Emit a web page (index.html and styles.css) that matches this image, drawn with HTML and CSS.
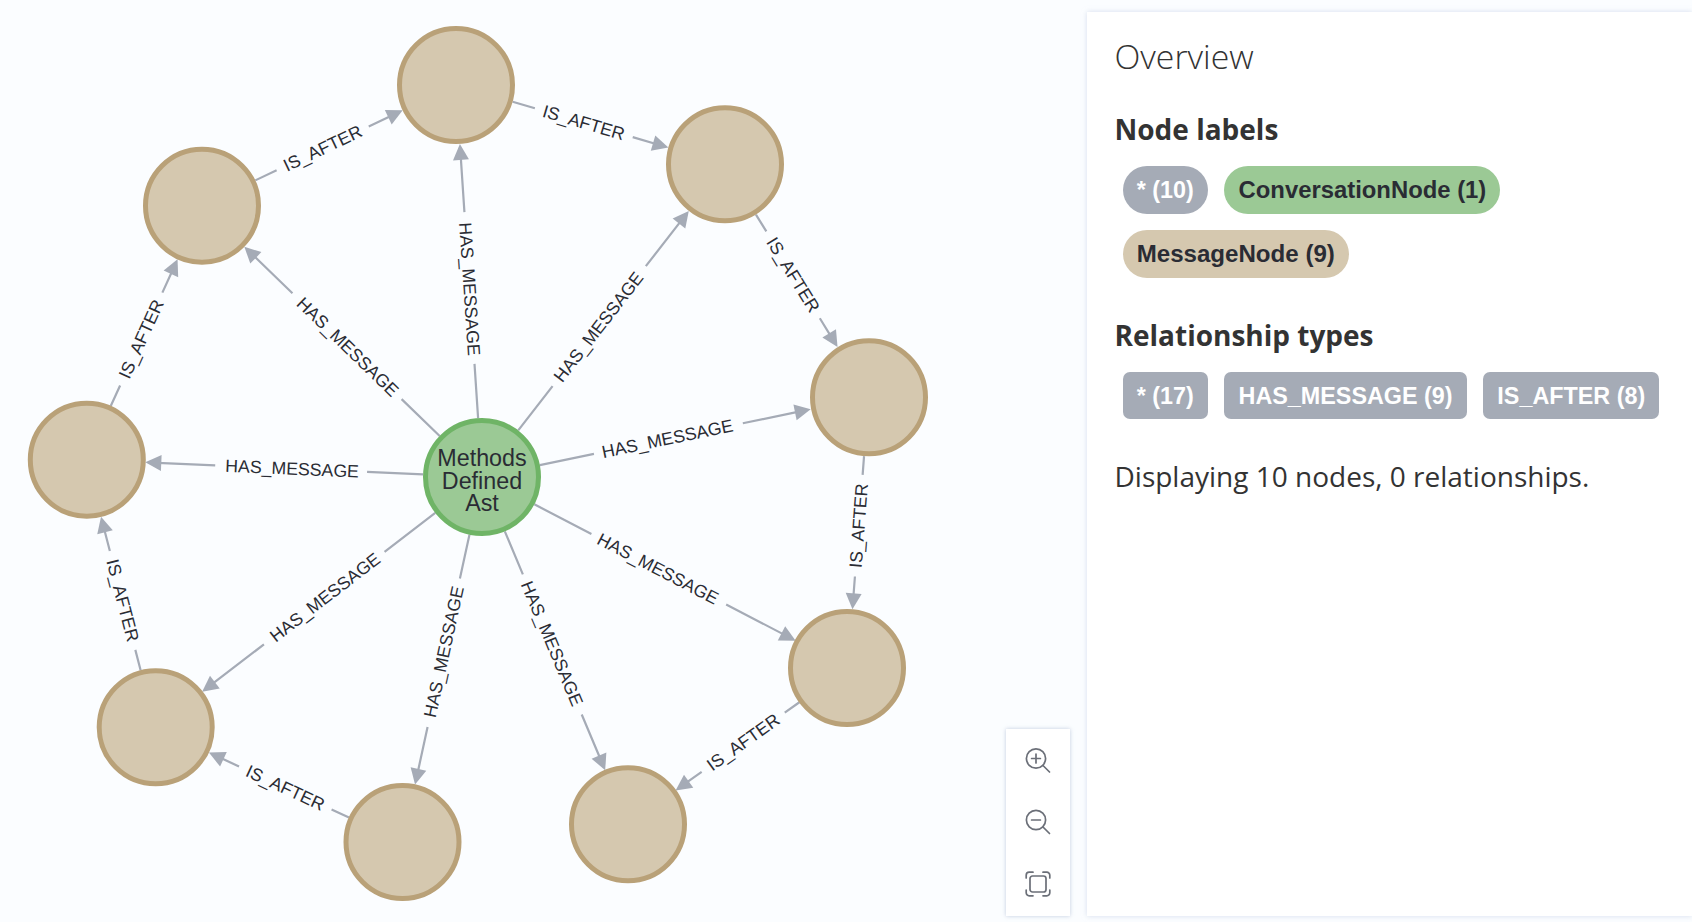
FILE: index.html
```html
<!DOCTYPE html>
<html lang="en">
<head>
<meta charset="utf-8">
<title>Graph overview</title>
<link rel="stylesheet" href="styles.css">
</head>
<body>
<main class="app">
  <section class="graph">
    <svg class="canvas" width="1087" height="922" viewBox="0 0 1087 922">
      <g transform="translate(469 281) rotate(86.2)"><path class="rel" d="M-125.4 0H-69M83 0H137.4"/><polygon class="head" points="-137.4,0 -121.4,-8 -121.4,8"/><text class="rel-label" x="8" y="6">HAS_MESSAGE</text></g>
      <g transform="translate(603.5 320.65) rotate(-52.15)"><path class="rel" d="M-139 0H-83M69 0H127"/><polygon class="head" points="139,0 123,-8 123,8"/><text class="rel-label" x="-8" y="6">HAS_MESSAGE</text></g>
      <g transform="translate(675.25 437.15) rotate(-11.65)"><path class="rel" d="M-138.3 0H-83M69 0H126.3"/><polygon class="head" points="138.3,0 122.3,-8 122.3,8"/><text class="rel-label" x="-8" y="6">HAS_MESSAGE</text></g>
      <g transform="translate(665 572.5) rotate(27.56)"><path class="rel" d="M-147.4 0H-83M69 0H135.4"/><polygon class="head" points="147.4,0 131.4,-8 131.4,8"/><text class="rel-label" x="-8" y="6">HAS_MESSAGE</text></g>
      <g transform="translate(555 650.85) rotate(67.22)"><path class="rel" d="M-129.6 0H-83M69 0H117.6"/><polygon class="head" points="129.6,0 113.6,-8 113.6,8"/><text class="rel-label" x="-8" y="6">HAS_MESSAGE</text></g>
      <g transform="translate(442.25 659.65) rotate(-77.72)"><path class="rel" d="M-115.9 0H-69M83 0H127.9"/><polygon class="head" points="-127.9,0 -111.9,-8 -111.9,8"/><text class="rel-label" x="8" y="6">HAS_MESSAGE</text></g>
      <g transform="translate(318.7 602.35) rotate(-37.5)"><path class="rel" d="M-134.9 0H-69M83 0H146.9"/><polygon class="head" points="-146.9,0 -130.9,-8 -130.9,8"/><text class="rel-label" x="8" y="6">HAS_MESSAGE</text></g>
      <g transform="translate(284.15 468.35) rotate(2.5)"><path class="rel" d="M-127 0H-69M83 0H139"/><polygon class="head" points="-139,0 -123,-8 -123,8"/><text class="rel-label" x="8" y="6">HAS_MESSAGE</text></g>
      <g transform="translate(342 341.35) rotate(44.1)"><path class="rel" d="M-124 0H-69M83 0H136"/><polygon class="head" points="-136,0 -120,-8 -120,8"/><text class="rel-label" x="8" y="6">HAS_MESSAGE</text></g>

      <g transform="translate(278.95 785) rotate(24.88)"><path class="rel" d="M-65.2 0H-44M58 0H77.2"/><polygon class="head" points="-77.2,0 -61.2,-8 -61.2,8"/><text class="rel-label" x="7" y="6">IS_AFTER</text></g>
      <g transform="translate(120.85 593.7) rotate(75.54)"><path class="rel" d="M-67.4 0H-44M58 0H79.4"/><polygon class="head" points="-79.4,0 -63.4,-8 -63.4,8"/><text class="rel-label" x="7" y="6">IS_AFTER</text></g>
      <g transform="translate(144.15 332.7) rotate(-65.52)"><path class="rel" d="M-80.6 0H-58M44 0H68.6"/><polygon class="head" points="80.6,0 64.6,-8 64.6,8"/><text class="rel-label" x="-7" y="6">IS_AFTER</text></g>
      <g transform="translate(329 145.35) rotate(-25.42)"><path class="rel" d="M-81.6 0H-58M44 0H69.6"/><polygon class="head" points="81.6,0 65.6,-8 65.6,8"/><text class="rel-label" x="-7" y="6">IS_AFTER</text></g>
      <g transform="translate(590.5 124.65) rotate(16.43)"><path class="rel" d="M-81.2 0H-58M44 0H69.2"/><polygon class="head" points="81.2,0 65.2,-8 65.2,8"/><text class="rel-label" x="-7" y="6">IS_AFTER</text></g>
      <g transform="translate(796.75 280.8) rotate(58.37)"><path class="rel" d="M-77.8 0H-58M44 0H65.8"/><polygon class="head" points="77.8,0 61.8,-8 61.8,8"/><text class="rel-label" x="-7" y="6">IS_AFTER</text></g>
      <g transform="translate(858.25 532.65) rotate(-85.67)"><path class="rel" d="M-64.8 0H-44M58 0H76.8"/><polygon class="head" points="-76.8,0 -60.8,-8 -60.8,8"/><text class="rel-label" x="7" y="6">IS_AFTER</text></g>
      <g transform="translate(737.5 746.35) rotate(-35.46)"><path class="rel" d="M-64 0H-44M58 0H76"/><polygon class="head" points="-76,0 -60,-8 -60,8"/><text class="rel-label" x="7" y="6">IS_AFTER</text></g>

      <circle class="node-msg" cx="456" cy="85" r="56.5"/>
      <circle class="node-msg" cx="725" cy="164.3" r="56.5"/>
      <circle class="node-msg" cx="869" cy="397.3" r="56.5"/>
      <circle class="node-msg" cx="847" cy="668" r="56.5"/>
      <circle class="node-msg" cx="628" cy="824.2" r="56.5"/>
      <circle class="node-msg" cx="402.5" cy="842" r="56.5"/>
      <circle class="node-msg" cx="155.7" cy="727.2" r="56.5"/>
      <circle class="node-msg" cx="86.8" cy="459.7" r="56.5"/>
      <circle class="node-msg" cx="202" cy="205.7" r="56.5"/>
      <circle class="node-conv" cx="482" cy="477" r="56.5"/>
      <text class="node-label" x="482" y="466">Methods</text>
      <text class="node-label" x="482" y="488.5">Defined</text>
      <text class="node-label" x="482" y="510.5">Ast</text>
    </svg>
    <div class="toolbar">
      <button class="tool" type="button" aria-label="Zoom in">
        <svg width="28" height="28" viewBox="0 0 28 28"><circle class="ic" cx="12" cy="11.5" r="9.6"/><path class="ic" d="M7.6 11.5h8.8M12 7.1v8.8M19 18.5l6.5 6.5"/></svg>
      </button>
      <button class="tool" type="button" aria-label="Zoom out">
        <svg width="28" height="28" viewBox="0 0 28 28"><circle class="ic" cx="12" cy="12" r="9.6"/><path class="ic" d="M7.6 12h8.8M19 19l6.5 6.5"/></svg>
      </button>
      <button class="tool" type="button" aria-label="Fit to screen">
        <svg width="28" height="28" viewBox="0 0 28 28"><rect class="ic" x="6" y="6" width="16" height="16" rx="2.5"/><path class="ic" d="M2.2 8V5.2a3 3 0 0 1 3-3H9M19 2.2h3.8a3 3 0 0 1 3 3V8M25.8 20v2.8a3 3 0 0 1-3 3H19M9 25.8H5.2a3 3 0 0 1-3-3V20"/></svg>
      </button>
    </div>
  </section>
  <aside class="panel">
    <h2 class="title">Overview</h2>
    <h3 class="heading">Node labels</h3>
    <div class="pills">
      <span class="pill round grey">* (10)</span>
      <span class="pill round green">ConversationNode (1)</span>
      <span class="pill round tan">MessageNode (9)</span>
    </div>
    <h3 class="heading">Relationship types</h3>
    <div class="pills">
      <span class="pill grey">* (17)</span>
      <span class="pill grey">HAS_MESSAGE (9)</span>
      <span class="pill grey">IS_AFTER (8)</span>
    </div>
    <p class="summary">Displaying 10 nodes, 0 relationships.</p>
  </aside>
</main>
</body>
</html>
```

FILE: styles.css
```css
* { box-sizing: border-box; }
html, body { margin: 0; padding: 0; height: 100%; overflow: hidden; }
body { background: #fbfdff; color: #333; font-family: "Open Sans", sans-serif; }

.app { display: flex; height: 922px; }

.graph { position: relative; flex: 0 0 1087px; height: 922px; }
.canvas { display: block; }

.rel { fill: none; stroke: #a5abb6; stroke-width: 2.2; }
.head { fill: #a5abb6; }
.rel-label {
  font-family: "Liberation Sans", Arial, sans-serif;
  font-size: 17.7px;
  fill: #2a2c34;
  text-anchor: middle;
}
.node-msg { fill: #d5c8af; stroke: #b9a178; stroke-width: 5; }
.node-conv { fill: #9bc995; stroke: #6fb466; stroke-width: 5; }
.node-label {
  font-family: "Liberation Sans", Arial, sans-serif;
  font-size: 23.3px;
  fill: #2a2c34;
  text-anchor: middle;
}

.toolbar {
  position: absolute;
  right: 17px;
  bottom: 6px;
  width: 64px;
  height: 187px;
  display: flex;
  flex-direction: column;
  justify-content: space-around;
  align-items: center;
  padding: 1px 0;
  background: #fff;
  box-shadow: 0 0 4px rgba(170, 185, 210, 0.7);
}
.tool {
  display: flex;
  padding: 0;
  border: 0;
  background: none;
  width: 28px;
  height: 28px;
}
.ic { fill: none; stroke: #6b6f78; stroke-width: 1.7; stroke-linecap: round; }

.panel {
  flex: 1;
  margin: 12px 0 6px 0;
  padding: 24px 27.5px 0;
  background: #fff;
  box-shadow: 0 0 5px rgba(190, 200, 225, 0.6);
}
.title {
  margin: 0 0 35px;
  font-size: 33.8px;
  line-height: 40px;
  font-weight: 300;
}
.heading {
  margin: 0 0 19px;
  font-size: 28px;
  line-height: 36px;
  font-weight: 700;
}
.pills {
  display: flex;
  flex-wrap: wrap;
  gap: 16.4px;
  margin: 0 0 39px 8px;
}
.pill {
  height: 47.7px;
  padding: 0 14.2px;
  border-radius: 7px;
  font-family: "Liberation Sans", Arial, sans-serif;
  font-weight: 700;
  line-height: 48.7px;
  white-space: nowrap;
}
.round { border-radius: 24px; }
.grey { background: #a5abb6; color: #fff; font-size: 23.35px; }
.green { background: #9bc995; color: #2a2c34; font-size: 23.85px; }
.tan { background: #d5c8af; color: #2a2c34; font-size: 24.1px; }
.summary {
  margin: 1px 0 0;
  font-size: 28px;
  line-height: 36px;
  font-weight: 400;
}
```
